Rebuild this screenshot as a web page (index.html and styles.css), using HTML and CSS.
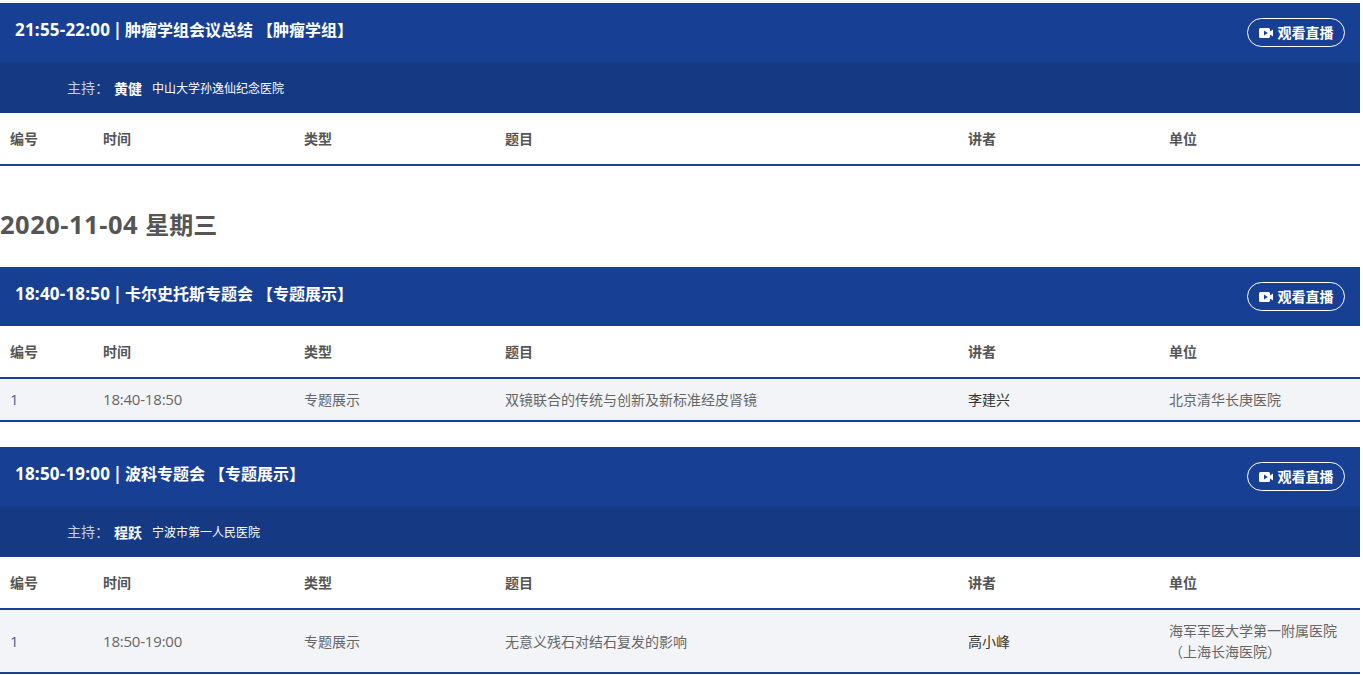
FILE: index.html
```html
<!DOCTYPE html>
<html lang="zh-CN">
<head>
<meta charset="utf-8">
<title>会议日程</title>
<link rel="stylesheet" href="styles.css">
</head>
<body>
<main class="page">
  <section class="session session-first">
    <header class="session-head">
      <h3 class="session-title"><span class="latin">21:55-22:00 | </span>肿瘤学组会议总结 【肿瘤学组】</h3>
      <a class="live-btn" href="#"><svg class="live-icon" viewBox="0 0 14 10"><path d="M1.5 0H9.5a1.5 1.5 0 0 1 1.5 1.5V3.5L14 1.5V8.5L11 6.5V8.5a1.5 1.5 0 0 1-1.5 1.5H1.5A1.5 1.5 0 0 1 0 8.5V1.5A1.5 1.5 0 0 1 1.5 0Z"/><path class="live-notch" d="M5 2.6V7.4L8.8 5Z"/></svg>观看直播</a>
    </header>
    <div class="host"><span class="host-label">主持：</span><strong class="host-name">黄健</strong><span class="host-org">中山大学孙逸仙纪念医院</span></div>
    <div class="row row-head"><div>编号</div><div>时间</div><div>类型</div><div>题目</div><div>讲者</div><div>单位</div></div>
  </section>

  <h2 class="day"><span class="latin">2020-11-04 </span>星期三</h2>

  <section class="session">
    <header class="session-head">
      <h3 class="session-title"><span class="latin">18:40-18:50 | </span>卡尔史托斯专题会 【专题展示】</h3>
      <a class="live-btn" href="#"><svg class="live-icon" viewBox="0 0 14 10"><path d="M1.5 0H9.5a1.5 1.5 0 0 1 1.5 1.5V3.5L14 1.5V8.5L11 6.5V8.5a1.5 1.5 0 0 1-1.5 1.5H1.5A1.5 1.5 0 0 1 0 8.5V1.5A1.5 1.5 0 0 1 1.5 0Z"/><path class="live-notch" d="M5 2.6V7.4L8.8 5Z"/></svg>观看直播</a>
    </header>
    <div class="row row-head"><div>编号</div><div>时间</div><div>类型</div><div>题目</div><div>讲者</div><div>单位</div></div>
    <div class="row row-body"><div class="num">1</div><div class="latin">18:40-18:50</div><div>专题展示</div><div>双镜联合的传统与创新及新标准经皮肾镜</div><div class="speaker">李建兴</div><div>北京清华长庚医院</div></div>
  </section>

  <section class="session">
    <header class="session-head">
      <h3 class="session-title"><span class="latin">18:50-19:00 | </span>波科专题会 【专题展示】</h3>
      <a class="live-btn" href="#"><svg class="live-icon" viewBox="0 0 14 10"><path d="M1.5 0H9.5a1.5 1.5 0 0 1 1.5 1.5V3.5L14 1.5V8.5L11 6.5V8.5a1.5 1.5 0 0 1-1.5 1.5H1.5A1.5 1.5 0 0 1 0 8.5V1.5A1.5 1.5 0 0 1 1.5 0Z"/><path class="live-notch" d="M5 2.6V7.4L8.8 5Z"/></svg>观看直播</a>
    </header>
    <div class="host"><span class="host-label">主持：</span><strong class="host-name">程跃</strong><span class="host-org">宁波市第一人民医院</span></div>
    <div class="row row-head"><div>编号</div><div>时间</div><div>类型</div><div>题目</div><div>讲者</div><div>单位</div></div>
    <div class="row row-body row-tall"><div class="num">1</div><div class="latin">18:50-19:00</div><div>专题展示</div><div>无意义残石对结石复发的影响</div><div class="speaker">高小峰</div><div>海军军医大学第一附属医院（上海长海医院）</div></div>
  </section>
</main>
</body>
</html>
```
FILE: styles.css
```css
* { box-sizing: border-box; }
html, body { margin: 0; padding: 0; background: #fff; }
body {
  font-family: "Open Sans", "Noto Sans CJK SC", sans-serif;
  color: #555;
  font-size: 14px;
  overflow: hidden;
  height: 675px;
}
.page { width: 1360px; padding-top: 3px; }
.session { margin-bottom: 25px; }
.session-first { margin-bottom: 0; }
.session-head {
  height: 59px;
  background: #174095;
  display: flex;
  align-items: center;
  justify-content: space-between;
  padding: 0 15px;
}
.session-title {
  margin: -6px 0 0;
  font-size: 16px;
  line-height: 24px;
  font-weight: 700;
  color: #fff;
}
.session-title .latin { font-size: 17px; letter-spacing: 0.2px; word-spacing: -2px; }
.live-btn {
  display: flex;
  align-items: center;
  justify-content: center;
  width: 98px;
  height: 29px;
  padding-bottom: 2px;
  border: 1px solid #fff;
  border-radius: 15px;
  color: #fff;
  font-size: 14px;
  font-weight: 700;
  text-decoration: none;
}
.live-icon { width: 14px; height: 10px; margin: 2px 5px 0 0; fill: #fff; flex: none; }
.live-notch { fill: #174095; }
.host {
  height: 51px;
  background: #153982;
  display: flex;
  align-items: center;
  padding-left: 67px;
  color: #fff;
}
.host-label { color: #c5cfe3; width: 47px; margin-top: -1px; }
.host-name { width: 38px; }
.host-org { font-size: 12px; }
.row {
  display: grid;
  grid-template-columns: 93px 201px 201px 463px 201px 201px;
  align-items: center;
}
.row > div { padding: 0 10px; }
.row-head {
  height: 53px;
  padding-bottom: 2px;
  border-bottom: 2px solid #174095;
  font-weight: 700;
}
.row-body {
  height: 43px;
  padding-bottom: 2px;
  background: #f3f4f8;
  border-bottom: 2px solid #174095;
  color: #666;
}
.row-body .latin { font-size: 15px; letter-spacing: -0.2px; }
.row-tall { height: 64px; padding-bottom: 0; line-height: 21px; }
.row-body .num { color: #41689a; font-size: 15px; }
.row-body .speaker { color: #333; }
.day {
  margin: 0;
  height: 101px;
  padding-top: 42px;
  font-size: 24px;
  line-height: 32px;
  font-weight: 700;
  color: #555;
}
.day .latin { font-size: 25.5px; letter-spacing: 0.5px; }
```
